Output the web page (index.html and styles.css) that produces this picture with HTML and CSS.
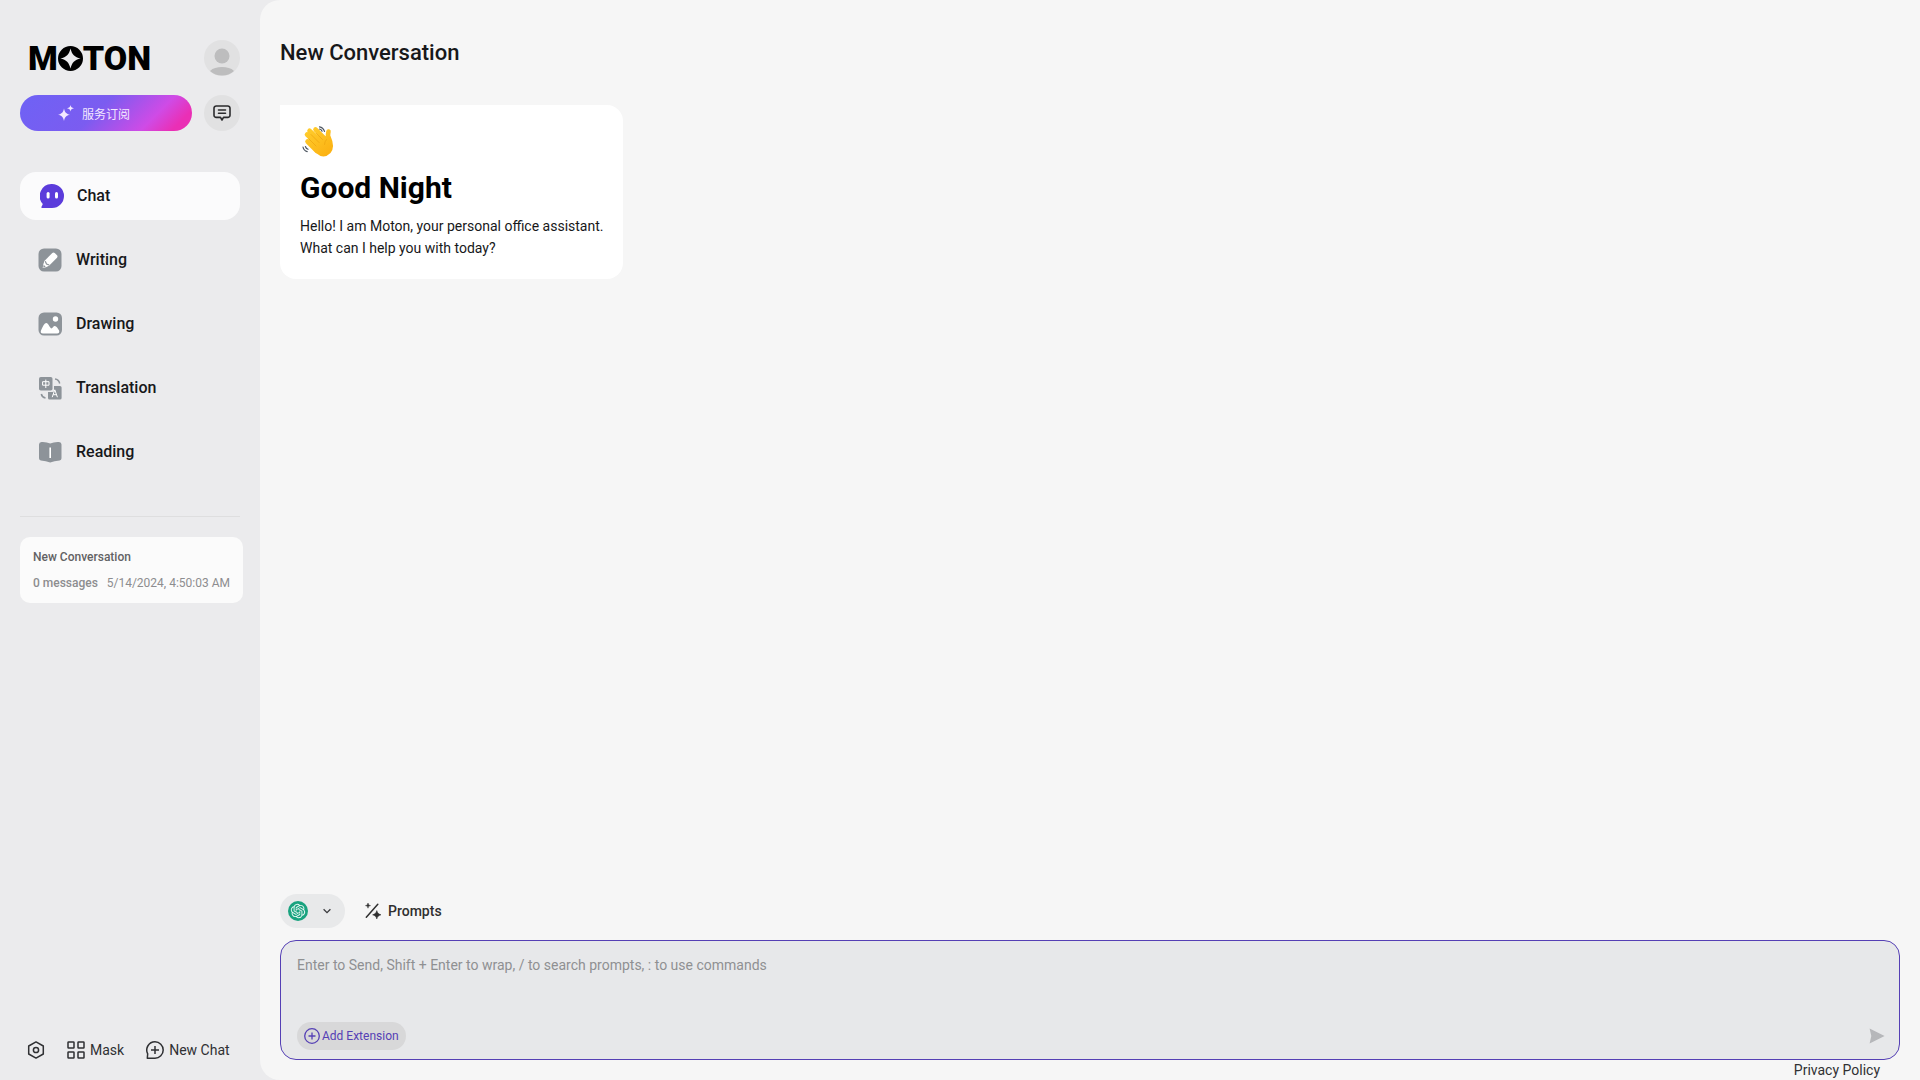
FILE: index.html
```html
<!DOCTYPE html>
<html lang="en">
<head>
  <meta charset="UTF-8" />
  <meta name="viewport" content="width=device-width, initial-scale=1.0" />
  <title>Moton</title>
  <link rel="stylesheet" href="styles.css">
</head>
<body>
  <aside class="sidebar">
    <header class="brand-row">
      <a href="#" class="logo">M<svg class="logo-star" viewBox="0 0 26 26" aria-hidden="true"><path fill-rule="evenodd" d="M13 0a13 13 0 1 1 0 26a13 13 0 0 1 0-26zM13 2.500C14.500 8.800 17.200 11.500 23.500 13C17.200 14.500 14.500 17.200 13 23.500C11.500 17.200 8.800 14.500 2.500 13C8.800 11.500 11.500 8.800 13 2.500z"/></svg>TON</a>
      <button class="round-btn" aria-label="Account">
        <svg width="36" height="36" viewBox="0 0 36 36" fill="#bdbdbe"><circle cx="18" cy="16" r="7.500"/><path d="M6 31C9 28 13 27 18 27s9 1 12 4a18 18 0 0 1-24 0z"/></svg>
      </button>
    </header>

    <div class="subscribe-row">
      <button class="subscribe-btn" lang="zh">
        <svg width="16" height="16" viewBox="0 0 16 16" fill="#f3e8ff"><path d="M6 3.500C6.800 7.300 8.200 8.800 12 9.800C8.200 10.700 6.800 12.200 6 16C5.200 12.200 3.800 10.700 0 9.800C3.800 8.800 5.200 7.300 6 3.500zM12.500 0C12.900 2 13.600 2.800 16 3.300C13.600 3.800 12.900 4.600 12.500 6.600C12.100 4.600 11.400 3.800 9 3.300C11.400 2.800 12.100 2 12.500 0z"/></svg>
        服务订阅
      </button>
      <button class="round-btn" aria-label="Feedback">
        <svg width="18" height="18" viewBox="0 0 18 18" fill="none" stroke="#2b2b2d" stroke-width="1.600" stroke-linecap="round" stroke-linejoin="round"><path d="M3.200 2h11.600A2.200 2.200 0 0 1 17 4.200v7A2.200 2.200 0 0 1 14.800 13.400H10.500L9 16L7.500 13.400H3.200A2.200 2.200 0 0 1 1 11.200v-7A2.200 2.200 0 0 1 3.200 2zM5.500 6h7M5.500 9.300h7"/></svg>
      </button>
    </div>

    <nav class="main-nav">
      <a href="#" class="nav-item active">
        <svg width="24" height="24" viewBox="0 0 24 24"><path fill="#5b3cdb" d="M12 0a12 12 0 1 1 0 24H2.500C1.200 24 1 23 1.800 22.200L2.800 20A12 12 0 0 1 12 0z"/><rect x="6.600" y="8" width="3" height="6.400" rx="1.500" fill="#fff"/><rect x="15" y="8" width="3" height="6.400" rx="1.500" fill="#fff"/></svg>
        Chat
      </a>
      <a href="#" class="nav-item">
        <svg width="24" height="24" viewBox="0 0 24 24"><rect x="0.500" y="0.500" width="23" height="23" rx="5.500" fill="#8d9399"/><path fill="#fff" d="M13.300 6l1-1q1.200-1 2.400 0l2.300 2.300q1 1.200 0 2.400l-8 8q-3 1.800-6.300 2.200q.3-3.700 1.700-6.900z"/><path fill="none" stroke="#8d9399" stroke-width="1.200" d="M7.300 13.200l1.200 2.800l2.700 1"/><path d="M5.200 19.400l.5-2.600l2 1.900z" fill="#8d9399"/></svg>
        Writing
      </a>
      <a href="#" class="nav-item">
        <svg width="24" height="24" viewBox="0 0 24 24"><rect x="0.500" y="0.500" width="23.500" height="23" rx="5.500" fill="#8d9399"/><circle cx="17.500" cy="7" r="2.700" fill="#fff"/><path fill="#fff" d="M3 18.500C5 14 6.500 11 8.300 11c2 0 3.500 4.600 5 5.600c1.300-.4 2-2.600 3.500-2.600c1.800 0 3 2.500 4.300 4.500c.6 1.800-.3 3-2 3H5C3 21.500 2.300 20.300 3 18.500z"/></svg>
        Drawing
      </a>
      <a href="#" class="nav-item">
        <svg width="24" height="24" viewBox="0 0 24 24"><rect x="1" y="1" width="13.500" height="13.500" rx="1.800" fill="#8d9399"/><path d="M16 10H22A1.600 1.600 0 0 1 23.600 11.600V22A1.600 1.600 0 0 1 22 23.600H11.600A1.600 1.600 0 0 1 10 22V16H14.500A1.500 1.500 0 0 0 16 14.500z" fill="#8d9399"/><path fill="none" stroke="#fff" stroke-width="1" d="M4.600 5.700h6.400v3.500H4.600zM7.800 3.600v8.400M14.200 21.200l2.600-7.400l2.600 7.400M15.100 18.700h3.400"/><path fill="none" stroke="#8d9399" stroke-width="1.500" d="M17 3q3.800.4 4.700 4.500M3.300 18q.6 3.300 4.200 3.900"/></svg>
        Translation
      </a>
      <a href="#" class="nav-item">
        <svg width="24" height="24" viewBox="0 0 24 24"><path fill="#8d9399" d="M1 4.500Q1 2.200 3.500 2q5-.3 8.700 1.600Q16 1.700 21 2q2.500.2 2.500 2.500v13.700q0 1.900-1.900 2.200q-5.400.5-9.400 2q-4.200-1.500-9.300-2Q1 20.100 1 18.200z"/><path d="M12.200 7.500v10.500" stroke="#fff" stroke-width="1.600"/></svg>
        Reading
      </a>
    </nav>

    <hr class="divider">

    <a href="#" class="chat-item">
      <span class="chat-item-title">New Conversation</span>
      <span class="chat-item-info"><span class="chat-item-count">0 messages</span><time>5/14/2024, 4:50:03 AM</time></span>
    </a>

    <footer class="sidebar-tail">
      <button class="text-btn" aria-label="Settings">
        <svg width="18" height="18" viewBox="0 0 18 18" fill="none" stroke="#2f3033" stroke-width="1.500" stroke-linejoin="round"><path d="M9 .9L16.300 5v8L9 17.100L1.700 13V5z"/><circle cx="9" cy="9" r="2.600"/></svg>
      </button>
      <button class="text-btn">
        <svg width="18" height="18" viewBox="0 0 18 18" fill="none" stroke="#2f3033" stroke-width="1.500"><rect x="1" y="1" width="6" height="6" rx=".6"/><rect x="11" y="1" width="6" height="6" rx=".6"/><rect x="1" y="11" width="6" height="6" rx=".6"/><rect x="11" y="11" width="6" height="6" rx=".6"/></svg>
        Mask
      </button>
      <button class="text-btn">
        <svg width="18" height="18" viewBox="0 0 18 18" fill="none" stroke="#2f3033" stroke-width="1.500" stroke-linejoin="round"><path d="M9 .8a8.200 8.200 0 1 1 0 16.400H1.300L1.700 12.800A8.200 8.200 0 0 1 9 .8zM9 5v8M5 9h8"/></svg>
        New Chat
      </button>
    </footer>
  </aside>

  <main class="chat">
    <h1 class="chat-title">New Conversation</h1>

    <section class="chat-body">
      <article class="greeting">
        <svg class="wave" width="36" height="36" viewBox="0 0 36 36" role="img" aria-label="Waving hand">
          <defs>
            <linearGradient id="skin" gradientUnits="userSpaceOnUse" x1="8" y1="6" x2="30" y2="32">
              <stop offset="0" stop-color="#ffcb2b"/>
              <stop offset="1" stop-color="#fbb011"/>
            </linearGradient>
          </defs>
          <g stroke="url(#skin)" stroke-width="4.600" stroke-linecap="round" fill="none">
            <path d="M7.500 17.500L17 27M7 10.500L20 23M9.500 6.800L23 19.500M15.500 5.500L26 16M28.500 7.500Q27.300 12 29 19"/>
          </g>
          <path fill="url(#skin)" d="M10 19L16 11L23 13.500L26.500 16.500L30.500 12Q35.500 23 30.500 29Q24 35.500 17.500 30Q12 26 10 19z"/>
          <path fill="none" stroke="#eda40f" stroke-width=".7" stroke-linecap="round" d="M9 15l7 7M11 10.500l8 8M16.500 9.500l6 6M26.500 15.500q-2 2-2 5"/>
          <path fill="none" stroke="#4c5560" stroke-width="1.200" stroke-linecap="round" d="M19.500 2.800q3.600.4 5 4.600M19.500 5q1.700.3 2.600 2.200M3 23q.8 3.800 4.200 4.600M5.400 22.500q.6 2 2.600 2.800"/>
        </svg>
        <h2 class="greeting-title">Good Night</h2>
        <p class="greeting-text">Hello! I am Moton, your personal office assistant.<br>What can I help you with today?</p>
      </article>
    </section>

    <div class="chat-actions">
      <button class="model-btn" aria-label="Choose model">
        <svg width="20" height="20" viewBox="0 0 40 40"><circle cx="20" cy="20" r="20" fill="#19a37f"/><path fill="#e9f8f4" transform="translate(5.600 5.600) scale(1.200)" d="M22.282 9.821a5.985 5.985 0 0 0-.516-4.910 6.046 6.046 0 0 0-6.510-2.900A6.065 6.065 0 0 0 4.981 4.182a5.985 5.985 0 0 0-3.998 2.900 6.046 6.046 0 0 0 .743 7.097 5.980 5.980 0 0 0 .511 4.911 6.051 6.051 0 0 0 6.515 2.900A5.985 5.985 0 0 0 13.260 24a6.056 6.056 0 0 0 5.772-4.206 5.989 5.989 0 0 0 3.998-2.900 6.056 6.056 0 0 0-.748-7.073zm-9.022 12.608a4.476 4.476 0 0 1-2.876-1.041l.142-.080 4.778-2.758a.795.795 0 0 0 .393-.681v-6.737l2.020 1.169a.071.071 0 0 1 .038.052v5.583a4.504 4.504 0 0 1-4.495 4.494zm-9.661-4.125a4.471 4.471 0 0 1-.535-3.014l.142.085 4.783 2.758a.771.771 0 0 0 .781 0l5.843-3.369v2.332a.080.080 0 0 1-.033.062L9.740 19.950a4.499 4.499 0 0 1-6.141-1.646zM2.341 7.896a4.485 4.485 0 0 1 2.366-1.973V11.600a.766.766 0 0 0 .388.677l5.814 3.354-2.020 1.169a.076.076 0 0 1-.071 0l-4.830-2.787A4.504 4.504 0 0 1 2.341 7.872zm16.596 3.856L13.104 8.364 15.119 7.200a.076.076 0 0 1 .071 0l4.830 2.791a4.494 4.494 0 0 1-.677 8.104v-5.677a.790.790 0 0 0-.407-.667zm2.011-3.023l-.142-.085-4.774-2.782a.776.776 0 0 0-.785 0L9.409 9.230V6.897a.066.066 0 0 1 .028-.062l4.830-2.787a4.499 4.499 0 0 1 6.680 4.660zM8.307 12.863l-2.020-1.164a.080.080 0 0 1-.038-.057V6.074a4.499 4.499 0 0 1 7.376-3.454l-.142.081L8.704 5.459a.795.795 0 0 0-.393.681zm1.098-2.365l2.602-1.500 2.607 1.500v2.999l-2.597 1.500-2.607-1.500z"/></svg>
        <svg width="8" height="8" viewBox="0 0 8 8" fill="none" stroke="#3b3c3f" stroke-width="1.300"><path d="M.6 2.200L4 5.600L7.400 2.200"/></svg>
      </button>
      <button class="prompts-btn">
        <svg width="16" height="16" viewBox="0 0 16 16" fill="#303030"><path d="M1.300 14.300L12.800 1.200" stroke="#303030" stroke-width="1.500" stroke-linecap="round"/><path d="M3 0C3.300 1.700 3.900 2.200 5.500 2.600C3.900 3 3.300 3.500 3 5.200C2.700 3.500 2.100 3 .5 2.600C2.100 2.200 2.700 1.700 3 0zM11.800 7.600C12.600 10.200 13.400 11 16 11.800C13.400 12.600 12.600 13.400 11.800 16C11 13.400 10.200 12.600 7.600 11.800C10.200 11 11 10.200 11.800 7.600z" stroke="#303030" stroke-width=".5"/></svg>
        Prompts
      </button>
    </div>

    <form class="input-panel">
      <textarea class="chat-input" aria-label="Message" placeholder="Enter to Send, Shift + Enter to wrap, / to search prompts, : to use commands"></textarea>
      <div class="input-tools">
        <button type="button" class="extension-btn">
          <svg width="16" height="16" viewBox="0 0 16 16" fill="none" stroke="#5540b5" stroke-width="1.300"><circle cx="8" cy="8" r="7.300"/><path d="M8 4.500v7M4.500 8h7"/></svg>
          Add Extension
        </button>
        <button type="submit" class="send-btn" aria-label="Send">
          <svg width="16" height="16" viewBox="0 0 16 16" fill="#b6b7ba"><path d="M.6.4L15.600 8L.6 15.600L2.300 8z"/></svg>
        </button>
      </div>
    </form>

    <footer class="chat-footer"><a href="#">Privacy Policy</a></footer>
  </main>
</body>
</html>
```

FILE: styles.css
```css
* {
  box-sizing: border-box;
}

body {
  margin: 0;
  min-height: 100vh;
  display: flex;
  background: #ebebed;
  color: #17181a;
  font-family: Roboto, 'Noto Sans CJK SC', sans-serif;
  font-size: 14px;
}

a {
  color: inherit;
  text-decoration: none;
}

button {
  display: flex;
  align-items: center;
  justify-content: center;
  margin: 0;
  padding: 0;
  border: none;
  background: none;
  color: inherit;
  font: inherit;
  cursor: pointer;
}

svg {
  display: block;
  flex-shrink: 0;
}

/* sidebar */
.sidebar {
  width: 260px;
  flex-shrink: 0;
  display: flex;
  flex-direction: column;
  padding: 40px 17px 16px 20px;
}

.brand-row,
.subscribe-row {
  display: flex;
  align-items: center;
  justify-content: space-between;
  gap: 12px;
  padding-right: 3px;
}

.logo {
  display: flex;
  align-items: center;
  padding-left: 8px;
  color: #000;
  font-size: 34px;
  line-height: 36px;
  font-weight: 900;
}

.logo-star {
  width: 25px;
  height: 25px;
}

.round-btn {
  width: 36px;
  height: 36px;
  flex-shrink: 0;
  border-radius: 50%;
  background: #e1e1e2;
}

.subscribe-row {
  margin-top: 19px;
}

.subscribe-btn {
  flex: 1;
  height: 36px;
  gap: 8px;
  padding-right: 24px;
  border-radius: 18px;
  background: linear-gradient(135deg, #6e62f5 0%, #7b5cf0 45%, #cf4be6 75%, #ea2fb5 90%);
  color: #f3e8ff;
  font-size: 12px;
}

.main-nav {
  display: flex;
  flex-direction: column;
  gap: 16px;
  margin-top: 41px;
  padding-right: 3px;
}

.nav-item {
  height: 48px;
  display: flex;
  align-items: center;
  gap: 14px;
  padding: 0 18px;
  border-radius: 16px;
  font-size: 16px;
  line-height: 20px;
  font-weight: 500;
}

.nav-item.active {
  padding-left: 20px;
  gap: 13px;
  background: #fbfbfc;
}

.divider {
  width: 220px;
  margin: 40px 0 20px;
  border: none;
  border-top: 1px solid #dededf;
}

.chat-item {
  display: flex;
  flex-direction: column;
  gap: 10px;
  padding: 12px 13px;
  border-radius: 10px;
  background: #fbfbfb;
  color: #8d8d8f;
  font-size: 12px;
  line-height: 16px;
}

.chat-item-title {
  color: #626264;
  font-weight: 500;
}

.chat-item-info {
  display: flex;
  justify-content: space-between;
  white-space: nowrap;
}

.chat-item-count {
  font-weight: 500;
}

.sidebar-tail {
  display: flex;
  align-items: center;
  gap: 22px;
  margin-top: auto;
  padding-left: 7px;
}

.text-btn {
  gap: 5px;
  height: 28px;
  color: #2f3033;
  white-space: nowrap;
}

/* chat window */
.chat {
  flex: 1;
  min-width: 0;
  display: flex;
  flex-direction: column;
  padding: 0 20px;
  border-radius: 20px 0 0 20px;
  background: #f6f6f6;
}

.chat-title {
  margin: 0;
  padding: 38px 0 37px;
  font-size: 22px;
  line-height: 30px;
  font-weight: 500;
}

.chat-body {
  flex: 1;
  display: flex;
  align-items: flex-start;
}

.greeting {
  padding: 19px 20px 20px;
  border-radius: 0 16px 16px 16px;
  background: #fff;
}

.greeting-title {
  margin: 6px 0 5px;
  color: #000;
  font-size: 30px;
  line-height: 44px;
  font-weight: 700;
}

.greeting-text {
  margin: 0;
  line-height: 22px;
}

.chat-actions {
  display: flex;
  align-items: center;
  gap: 20px;
  margin-bottom: 12px;
}

.model-btn {
  height: 34px;
  gap: 15px;
  padding: 0 14px 0 8px;
  border-radius: 17px;
  background: #e8e9ea;
}

.prompts-btn {
  gap: 7px;
  color: #303030;
  font-weight: 500;
}

.input-panel {
  display: flex;
  flex-direction: column;
  height: 120px;
  padding: 12px 14px 9px 16px;
  border: 1px solid #5540b5;
  border-radius: 16px;
  background: #e7e8ea;
}

.chat-input {
  flex: 1;
  width: 100%;
  padding: 0;
  border: none;
  outline: none;
  resize: none;
  background: none;
  color: inherit;
  font: inherit;
  line-height: 24px;
}

.chat-input::placeholder {
  color: #8f9092;
}

.input-tools {
  display: flex;
  align-items: center;
  justify-content: space-between;
}

.extension-btn {
  height: 28px;
  gap: 2px;
  padding: 0 7px;
  border-radius: 14px;
  background: #d8d8d9;
  color: #5540b5;
  font-size: 12px;
}

.chat-footer {
  padding-right: 20px;
  color: #303133;
  line-height: 20px;
  text-align: right;
}
```
